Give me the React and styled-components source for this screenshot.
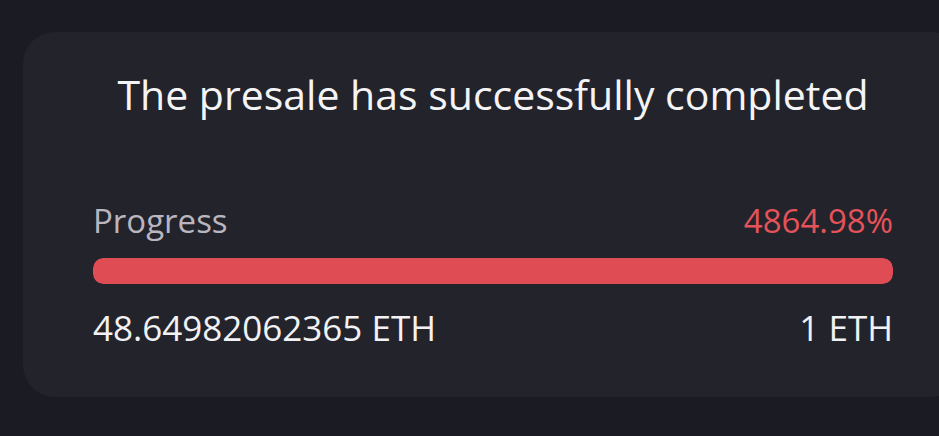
import React from "react";
import styled, { createGlobalStyle } from "styled-components";

const Global = createGlobalStyle`
  html, body {
    margin: 0;
    padding: 0;
    background: #1b1b24;
    font-family: "Open Sans", "Noto Sans", sans-serif;
    overflow: hidden;
  }
`;

const Page = styled.div`
  width: 939px;
  height: 436px;
  padding: 32px 0 0 23px;
  box-sizing: border-box;
  overflow: hidden;
`;

const Card = styled.div`
  width: 940px;
  height: 365px;
  box-sizing: border-box;
  background: #23232c;
  border-radius: 32px;
  padding: 34px 70px 0 70px;
  display: flex;
  flex-direction: column;
`;

const Title = styled.h2`
  margin: 0;
  text-align: center;
  color: #f4f4f6;
  font-size: 41px;
  font-weight: 400;
  line-height: 56px;
`;

const Row = styled.div`
  display: flex;
  justify-content: space-between;
  align-items: baseline;
  margin-top: ${(p) => p.top}px;
`;

const Label = styled.span`
  font-size: ${(p) => p.size}px;
  line-height: ${(p) => Math.round(p.size * 1.37)}px;
  color: ${(p) => p.color || "#f2f2f4"};
`;

const Track = styled.div`
  margin-top: 15px;
  height: 26px;
  border-radius: 10px;
  background: #2e2e38;
  overflow: hidden;
`;

const Fill = styled.div`
  height: 100%;
  border-radius: 10px;
  background: #e04c54;
`;

export default function App() {
  const percent = 4864.98;
  return (
    <Page>
      <Global />
      <Card>
        <Title>The presale has successfully completed</Title>
        <Row top={76}>
          <Label size={33} color="#bab6bf">Progress</Label>
          <Label size={33} color="#e5535a">{percent}%</Label>
        </Row>
        <Track>
          <Fill style={{ width: `${Math.min(percent, 100)}%` }} />
        </Track>
        <Row top={20}>
          <Label size={35}>48.64982062365 ETH</Label>
          <Label size={35}>1 ETH</Label>
        </Row>
      </Card>
    </Page>
  );
}
